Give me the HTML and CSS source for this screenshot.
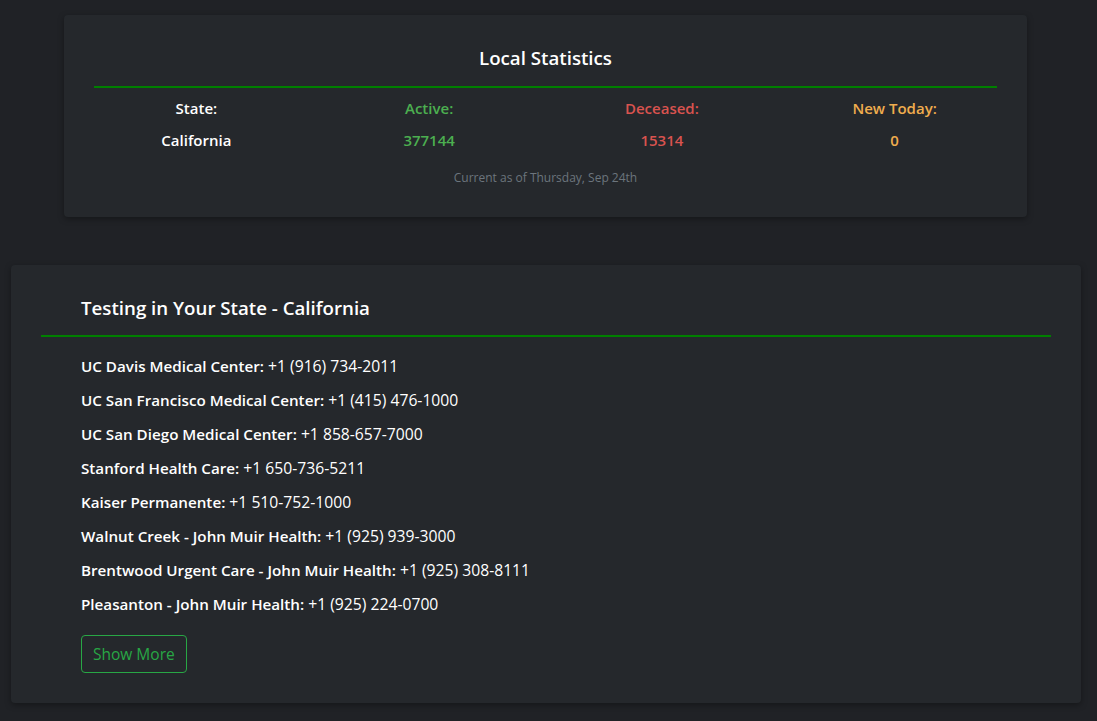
FILE: index.html
```html
<!DOCTYPE html>
<html>
<head>
<meta charset="utf-8">
<link rel="stylesheet" href="styles.css">
</head>
<body>
<div class="page">
  <section class="card stats">
    <h2 class="stats-title">Local Statistics</h2>
    <hr class="rule">
    <div class="stats-grid">
      <div class="col"><div class="label">State:</div><div class="value">California</div></div>
      <div class="col active"><div class="label">Active:</div><div class="value">377144</div></div>
      <div class="col deceased"><div class="label">Deceased:</div><div class="value">15314</div></div>
      <div class="col newtoday"><div class="label">New Today:</div><div class="value">0</div></div>
    </div>
    <p class="updated">Current as of Thursday, Sep 24th</p>
  </section>

  <section class="card testing">
    <h2 class="testing-title">Testing in Your State - California</h2>
    <hr class="rule">
    <ul class="sites">
      <li><b>UC Davis Medical Center:</b> +1 (916) 734-2011</li>
      <li><b>UC San Francisco Medical Center:</b> +1 (415) 476-1000</li>
      <li><b>UC San Diego Medical Center:</b> +1 858-657-7000</li>
      <li><b>Stanford Health Care:</b> +1 650-736-5211</li>
      <li><b>Kaiser Permanente:</b> +1 510-752-1000</li>
      <li><b>Walnut Creek - John Muir Health:</b> +1 (925) 939-3000</li>
      <li><b>Brentwood Urgent Care - John Muir Health:</b> +1 (925) 308-8111</li>
      <li><b>Pleasanton - John Muir Health:</b> +1 (925) 224-0700</li>
    </ul>
    <button class="btn-more">Show More</button>
  </section>
</div>
</body>
</html>
```
FILE: styles.css
```css
* { box-sizing: border-box; }
html, body { margin: 0; padding: 0; }
body {
  background: #202226;
  color: #ffffff;
  font-family: "Open Sans", "Noto Sans", sans-serif;
  height: 721px;
  overflow: hidden;
}
.page {
  display: flex;
  flex-direction: column;
  padding-top: 15px;
}
.card {
  background: #25282c;
  border-radius: 4px;
  box-shadow: 0 2px 6px rgba(0,0,0,0.35);
}
.stats {
  margin: 0 70px 0 64px;
  padding: 31px 16px 30px;
}
.stats-title {
  margin: 0;
  text-align: center;
  font-size: 18.7px;
  line-height: 24px;
  font-weight: 600;
}
.rule {
  border: 0;
  height: 2px;
  background: #008000;
  margin: 16px 14px 0;
}
.stats-grid {
  display: grid;
  grid-template-columns: repeat(4, 1fr);
  margin-top: 9px;
  text-align: center;
  font-weight: 600;
  font-size: 15px;
  line-height: 22px;
}
.col { display: flex; flex-direction: column; gap: 10px; }
.active { color: #4caf50; }
.deceased { color: #d9534f; }
.newtoday { color: #f0ad4e; }
.updated {
  margin: 18px 0 0;
  text-align: center;
  font-size: 12px;
  line-height: 18px;
  color: #6c757d;
}
.testing {
  margin: 48px 16px 0 11px;
  padding: 31px 30px 30px;
}
.testing-title {
  margin: 0 0 0 40px;
  font-size: 18.7px;
  line-height: 24px;
  font-weight: 600;
}
.testing .rule { margin: 15px 0 0; }
.sites {
  list-style: none;
  margin: 17px 0 0 40px;
  padding: 0;
  display: flex;
  flex-direction: column;
  gap: 10px;
  font-size: 15.7px;
  line-height: 24px;
}
.sites b { font-weight: 600; font-size: 15.2px; }
.btn-more {
  align-self: flex-start;
  margin: 19px 0 0 40px;
  height: 38px;
  padding: 0 11px;
  background: transparent;
  border: 1px solid #28a745;
  border-radius: 4px;
  color: #28a745;
  font-family: inherit;
  font-size: 15.5px;
}
```
